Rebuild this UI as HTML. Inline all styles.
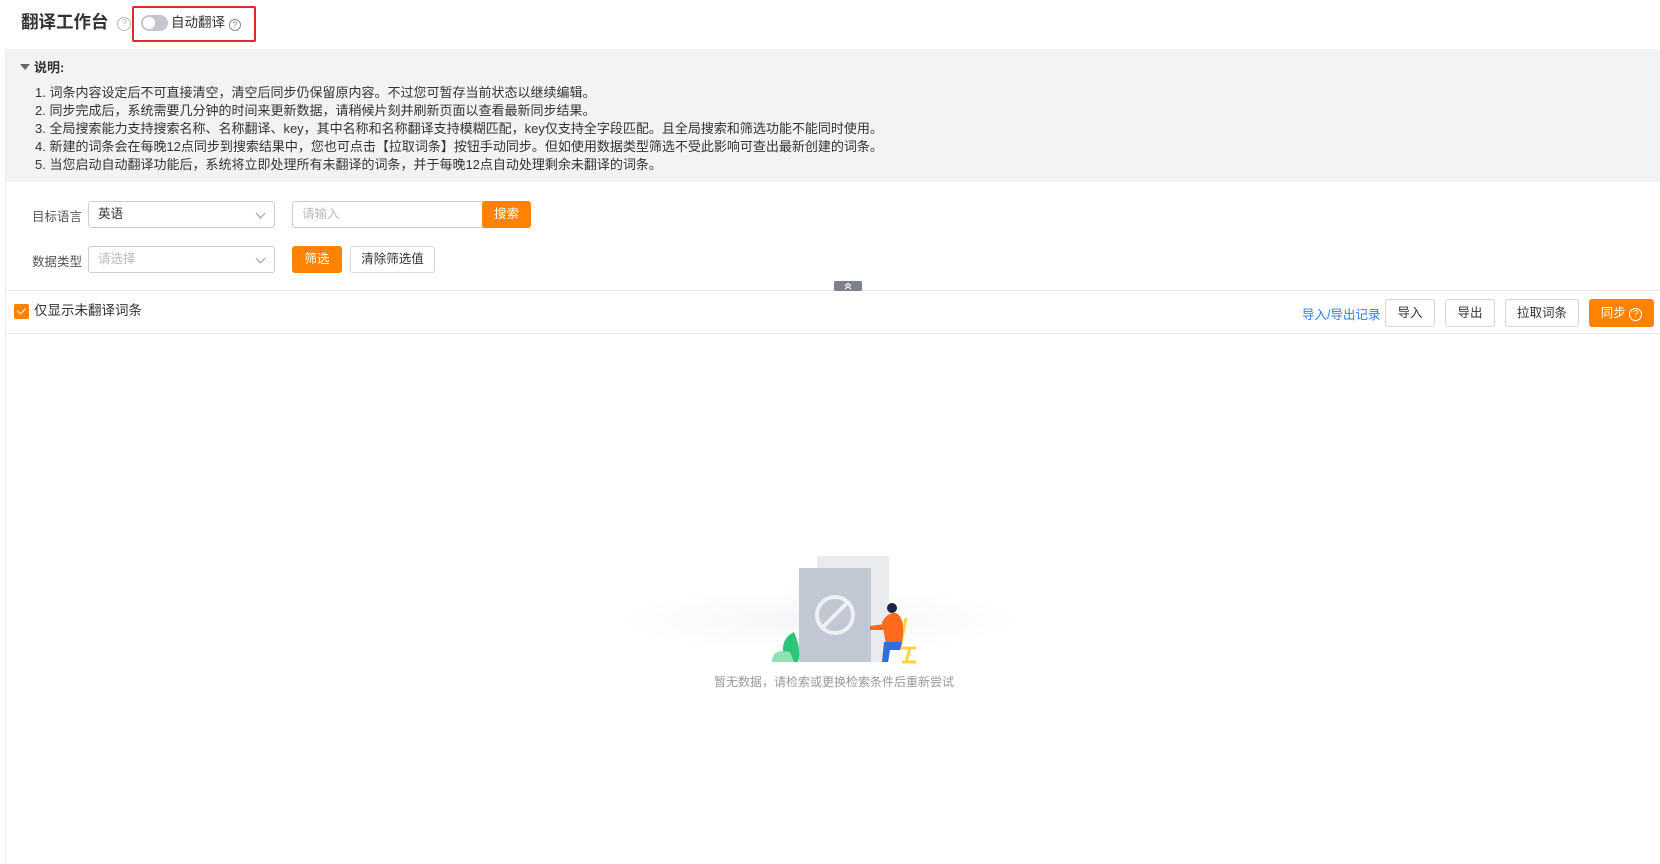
<!DOCTYPE html>
<html><head><meta charset="utf-8"><style>
*{box-sizing:border-box;margin:0;padding:0}
body{width:1660px;height:864px;background:#fff;font-family:"Liberation Sans","Noto Sans CJK SC",sans-serif;color:#333;position:relative;overflow:hidden;font-size:13px}
.abs{position:absolute}
.title{left:21px;top:10px;font-size:17.5px;font-weight:bold;color:#333;line-height:24px}
.q{display:inline-block;width:14px;height:14px;border:1px solid #bbb;border-radius:50%;font-size:10px;line-height:12px;text-align:center;color:#bbb;font-weight:normal}
.redbox{left:132px;top:6px;width:124px;height:36px;border:2px solid #e5262b;border-radius:2px}
.panel{left:6px;top:49px;width:1654px;height:133px;background:#f2f3f5}
.lines{left:35px;top:84px;line-height:18px;font-size:13px;color:#333}
.sel{border:1px solid #c9cdd4;border-radius:3px;height:27px;background:#fff;padding-left:9px;line-height:25px;font-size:12.5px}
.chev{position:absolute;right:10px;top:8px;width:7px;height:7px;border-right:1px solid #999;border-bottom:1px solid #999;transform:rotate(45deg)}
.btn{border:1px solid #d5d8de;border-radius:3px;background:#fff;text-align:center;font-size:12.5px;color:#333}
.ob{background:#ff8200;color:#fff;border-radius:3px;text-align:center;font-size:12.5px}
.lbl{font-size:12.5px;color:#555}
</style></head><body>
<div class="abs" style="left:0;top:49px;width:6px;height:815px;border-right:1px solid #eceef1"></div>
<div class="abs title">翻译工作台 <span class="q" style="vertical-align:2px;margin-left:4px">?</span></div>
<div class="abs redbox"></div>
<div class="abs" style="left:141px;top:15px;width:27px;height:16px;border-radius:8px;background:#c4c7cc"></div>
<div class="abs" style="left:143px;top:17px;width:12px;height:12px;border-radius:50%;background:#fff"></div>
<div class="abs" style="left:171px;top:14px;font-size:13.5px;line-height:18px">自动翻译 <span class="q" style="width:12px;height:12px;line-height:10px;font-size:9px;border-color:#888;color:#888;vertical-align:-1px">?</span></div>
<div class="abs panel"></div>
<div class="abs" style="left:20px;top:64px;width:0;height:0;border-left:5px solid transparent;border-right:5px solid transparent;border-top:6px solid #666"></div>
<div class="abs" style="left:34px;top:59px;font-weight:bold;font-size:13px;line-height:18px">说明:</div>
<div class="abs lines">1. 词条内容设定后不可直接清空，清空后同步仍保留原内容。不过您可暂存当前状态以继续编辑。<br>2. 同步完成后，系统需要几分钟的时间来更新数据，请稍候片刻并刷新页面以查看最新同步结果。<br>3. 全局搜索能力支持搜索名称、名称翻译、key，其中名称和名称翻译支持模糊匹配，key仅支持全字段匹配。且全局搜索和筛选功能不能同时使用。<br>4. 新建的词条会在每晚12点同步到搜索结果中，您也可点击【拉取词条】按钮手动同步。但如使用数据类型筛选不受此影响可查出最新创建的词条。<br>5. 当您启动自动翻译功能后，系统将立即处理所有未翻译的词条，并于每晚12点自动处理剩余未翻译的词条。</div>
<div class="abs lbl" style="left:32px;top:206px">目标语言</div>
<div class="abs sel" style="left:88px;top:201px;width:187px">英语<span class="chev"></span></div>
<div class="abs sel" style="left:292px;top:201px;width:192px;color:#bbb;border-radius:3px 0 0 3px">请输入</div>
<div class="abs ob" style="left:482px;top:201px;width:49px;height:27px;line-height:27px">搜索</div>
<div class="abs lbl" style="left:32px;top:251px">数据类型</div>
<div class="abs sel" style="left:88px;top:246px;width:187px;color:#bbb">请选择<span class="chev"></span></div>
<div class="abs ob" style="left:292px;top:246px;width:50px;height:27px;line-height:27px">筛选</div>
<div class="abs btn" style="left:350px;top:246px;width:85px;height:27px;line-height:25px">清除筛选值</div>
<div class="abs" style="left:6px;top:290px;width:1654px;height:1px;background:#e5e6eb"></div>
<div class="abs" style="left:834px;top:281px;width:28px;height:10px;background:#7d8189;border-radius:1px"></div>
<svg class="abs" style="left:844px;top:282px" width="8" height="8" viewBox="0 0 8 8"><path d="M1 4 L4 1.5 L7 4 M1 7 L4 4.5 L7 7" stroke="#fff" stroke-width="1.2" fill="none"/></svg>
<div class="abs" style="left:14px;top:304px;width:15px;height:15px;background:#ff8200;border-radius:2px"></div>
<div class="abs" style="left:19px;top:306px;width:5px;height:8px;border-right:1.5px solid #fff;border-bottom:1.5px solid #fff;transform:rotate(45deg)"></div>
<div class="abs" style="left:34px;top:302px;font-size:13.5px;line-height:18px">仅显示未翻译词条</div>
<div class="abs" style="left:1302px;top:304px;color:#2e7cf6;font-size:12.5px">导入/导出记录</div>
<div class="abs btn" style="left:1385px;top:299px;width:50px;height:28px;line-height:26px">导入</div>
<div class="abs btn" style="left:1445px;top:299px;width:50px;height:28px;line-height:26px">导出</div>
<div class="abs btn" style="left:1505px;top:299px;width:74px;height:28px;line-height:26px">拉取词条</div>
<div class="abs ob" style="left:1589px;top:299px;width:65px;height:28px;line-height:28px">同步 <span class="q" style="width:13px;height:13px;line-height:11px;border-color:#fff;color:#fff;border-width:1.5px">?</span></div>
<div class="abs" style="left:6px;top:333px;width:1654px;height:1px;background:#e5e6eb"></div>
<svg class="abs" style="left:620px;top:550px" width="420" height="120" viewBox="0 0 420 120">
<defs><radialGradient id="g" cx="0.5" cy="0.5" r="0.5"><stop offset="0" stop-color="#f4f5f7"/><stop offset="1" stop-color="#fff"/></radialGradient></defs>
<ellipse cx="200" cy="70" rx="200" ry="32" fill="url(#g)"/>
<rect x="197" y="6" width="72" height="106" fill="#e9ebef"/>
<rect x="179" y="18" width="72" height="94" fill="#c2c8d3"/>
<circle cx="215" cy="65" r="18" fill="none" stroke="#eef0f3" stroke-width="4"/>
<line x1="203" y1="77" x2="227" y2="53" stroke="#eef0f3" stroke-width="4"/>
<path d="M165 112 Q158 90 174 82 Q182 100 178 112Z" fill="#2ec47a"/>
<path d="M152 112 Q152 98 170 102 L174 112Z" fill="#8fe0b5"/>
<path d="M286 68 L280 98 L296 98 M290 98 L286 112 M282 112 L296 112" stroke="#ffd23f" stroke-width="3" fill="none"/>
<path d="M262 72 Q268 62 276 63 Q286 68 282 92 L266 94Z" fill="#ff6a1f"/>
<path d="M250 76 L264 74 L264 80 L250 80Z" fill="#ff6a1f"/>
<circle cx="272" cy="58" r="5" fill="#1f2440"/>
<path d="M264 92 L282 92 L280 100 L270 100 L268 112 L262 112Z" fill="#2f6ee0"/>
</svg>
<div class="abs" style="left:714px;top:673px;width:240px;text-align:center;color:#999;font-size:12px">暂无数据，请检索或更换检索条件后重新尝试</div>
</body></html>
